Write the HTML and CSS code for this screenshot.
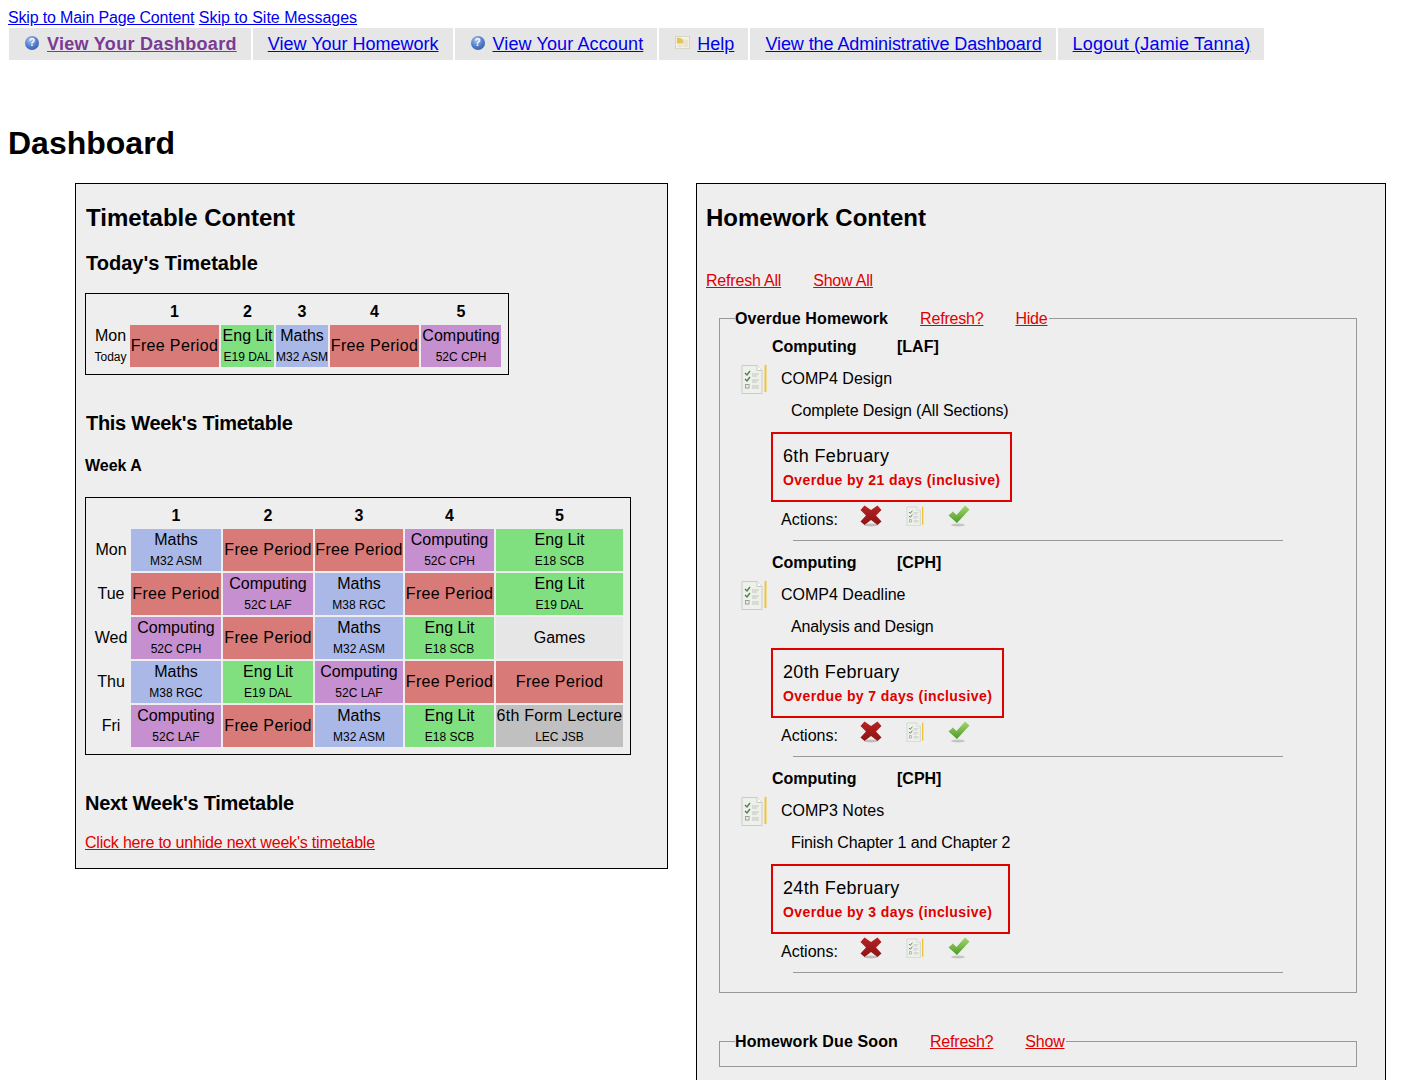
FILE: index.html
```html
<!DOCTYPE html>
<html>
<head>
    <title>Dashboard</title>
    <link rel="stylesheet" href="styles.css">
</head>
<body>
    <svg class="sprite" width="0" height="0">
        <defs>
            <linearGradient id="tick" x1="0" y1="0" x2="0" y2="1">
                <stop offset="0" stop-color="#a6d86a"/>
                <stop offset="1" stop-color="#4c9a2a"/>
            </linearGradient>
            <linearGradient id="redx" x1="0" y1="0" x2="0" y2="1">
                <stop offset="0" stop-color="#b82222"/>
                <stop offset="1" stop-color="#8c1414"/>
            </linearGradient>
        </defs>
        <symbol id="icon-folder" viewBox="0 0 16 16">
            <rect x="0.5" y="1.5" width="15" height="13" fill="#f4f1e6" stroke="#d8d4c4"/>
            <path d="M2 3h4l1 1.5h2V9H2z" fill="#e2c35a"/>
            <rect x="9" y="5" width="5" height="8" fill="#e8e3cf"/>
            <rect x="3" y="10" width="5" height="3" fill="#e8e3cf"/>
        </symbol>
        <symbol id="icon-list" viewBox="0 0 26 30">
            <path d="M1 1.5h15l5 5v23H1z" fill="#eef0ec" stroke="#c9cbc6"/>
            <path d="M16 1.5v5h5" fill="#fafafa" stroke="#c9cbc6"/>
            <path d="M4 9l2 2 3-4" fill="none" stroke="#4a7f42" stroke-width="1.3"/>
            <path d="M4 15l2 2 3-4" fill="none" stroke="#4a7f42" stroke-width="1.3"/>
            <rect x="4.5" y="20.5" width="3.5" height="3.5" fill="none" stroke="#9a9f98"/>
            <path d="M11 10h7M11 12h5M11 16h7M11 18h5M11 22h7M11 24h7" stroke="#c0c4be"/>
            <rect x="23.5" y="1" width="2" height="27" fill="#eec536"/>
        </symbol>
        <symbol id="icon-cross" viewBox="0 0 22 22">
            <ellipse cx="11" cy="20" rx="7" ry="1.5" fill="#bdbdbd"/>
            <path d="M4.5 0.5L11 5l6.5-4.5L21.5 5 16 10.5l5.5 6-4 3.5-6.5-5-6.5 5-4-3.5 5.500-6L0.500 5z" fill="url(#redx)"/>
        </symbol>
        <symbol id="icon-check" viewBox="0 0 22 22">
            <ellipse cx="10" cy="20" rx="7" ry="1.500" fill="#c4c4c4"/>
            <path d="M0.500 10.500L5 6.500 8.500 10 17 0.500l4.500 4L9 18z" fill="url(#tick)"/>
        </symbol>
    </svg>

    <div class="skip">
        <a href="#main" class="skip-main">Skip to Main Page Content</a>
        <a href="#messages">Skip to Site Messages</a>
    </div>

    <ul class="nav">
        <li><span class="nav-ball">?</span><a href="#" class="current">View Your Dashboard</a></li>
        <li><a href="#">View Your Homework</a></li>
        <li><span class="nav-ball">?</span><a href="#" class="account">View Your Account</a></li>
        <li><svg class="nav-icon"><use href="#icon-folder"/></svg><a href="#">Help</a></li>
        <li><a href="#" class="admin">View the Administrative Dashboard</a></li>
        <li><a href="#" class="logout">Logout (Jamie Tanna)</a></li>
    </ul>

    <h1>Dashboard</h1>

    <div class="panels" id="main">
        <div class="panel panel-left">
            <h2>Timetable Content</h2>
            <h3 class="first">Today's Timetable</h3>
            <table class="tt today">
                <tr><th></th><th>1</th><th>2</th><th>3</th><th>4</th><th>5</th></tr>
                <tr>
                    <td class="day">Mon<small>Today</small></td>
                    <td class="free">Free Period</td>
                    <td class="eng">Eng Lit<small>E19 DAL</small></td>
                    <td class="maths">Maths<small>M32 ASM</small></td>
                    <td class="free">Free Period</td>
                    <td class="comp">Computing<small>52C CPH</small></td>
                </tr>
            </table>

            <h3 class="wk">This Week's Timetable</h3>
            <h4>Week A</h4>
            <table class="tt week">
                <tr><th></th><th>1</th><th>2</th><th>3</th><th>4</th><th>5</th></tr>
                <tr>
                    <td class="day">Mon</td>
                    <td class="maths">Maths<small>M32 ASM</small></td>
                    <td class="free">Free Period</td>
                    <td class="free">Free Period</td>
                    <td class="comp">Computing<small>52C CPH</small></td>
                    <td class="eng">Eng Lit<small>E18 SCB</small></td>
                </tr>
                <tr>
                    <td class="day">Tue</td>
                    <td class="free">Free Period</td>
                    <td class="comp">Computing<small>52C LAF</small></td>
                    <td class="maths">Maths<small>M38 RGC</small></td>
                    <td class="free">Free Period</td>
                    <td class="eng">Eng Lit<small>E19 DAL</small></td>
                </tr>
                <tr>
                    <td class="day">Wed</td>
                    <td class="comp">Computing<small>52C CPH</small></td>
                    <td class="free">Free Period</td>
                    <td class="maths">Maths<small>M32 ASM</small></td>
                    <td class="eng">Eng Lit<small>E18 SCB</small></td>
                    <td class="games">Games</td>
                </tr>
                <tr>
                    <td class="day">Thu</td>
                    <td class="maths">Maths<small>M38 RGC</small></td>
                    <td class="eng">Eng Lit<small>E19 DAL</small></td>
                    <td class="comp">Computing<small>52C LAF</small></td>
                    <td class="free">Free Period</td>
                    <td class="free">Free Period</td>
                </tr>
                <tr>
                    <td class="day">Fri</td>
                    <td class="comp">Computing<small>52C LAF</small></td>
                    <td class="free">Free Period</td>
                    <td class="maths">Maths<small>M32 ASM</small></td>
                    <td class="eng">Eng Lit<small>E18 SCB</small></td>
                    <td class="lecture">6th Form Lecture<small>LEC JSB</small></td>
                </tr>
            </table>

            <h3 class="wk next">Next Week's Timetable</h3>
            <p class="unhide"><a href="#">Click here to unhide next week's timetable</a></p>
        </div>

        <div class="panel panel-right">
            <h2>Homework Content</h2>
            <p class="all-links"><a href="#">Refresh All</a><a href="#">Show All</a></p>

            <fieldset class="hw-group">
                <legend><b>Overdue Homework</b><a href="#">Refresh?</a><a href="#">Hide</a></legend>

                <div class="hw">
                    <div class="hw-subject"><span>Computing</span><span>[LAF]</span></div>
                    <div class="hw-title"><svg class="hw-icon"><use href="#icon-list"/></svg>COMP4 Design</div>
                    <div class="hw-desc">Complete Design (All Sections)</div>
                    <div class="hw-due">
                        <div class="hw-date">6th February</div>
                        <div class="hw-late">Overdue by 21 days (inclusive)</div>
                    </div>
                    <div class="hw-actions">
                        <span>Actions:</span>
                        <svg class="act act-x"><use href="#icon-cross"/></svg>
                        <svg class="act act-list"><use href="#icon-list"/></svg>
                        <svg class="act act-ok"><use href="#icon-check"/></svg>
                    </div>
                </div>

                <div class="hw">
                    <div class="hw-subject"><span>Computing</span><span>[CPH]</span></div>
                    <div class="hw-title"><svg class="hw-icon"><use href="#icon-list"/></svg>COMP4 Deadline</div>
                    <div class="hw-desc">Analysis and Design</div>
                    <div class="hw-due">
                        <div class="hw-date">20th February</div>
                        <div class="hw-late">Overdue by 7 days (inclusive)</div>
                    </div>
                    <div class="hw-actions">
                        <span>Actions:</span>
                        <svg class="act act-x"><use href="#icon-cross"/></svg>
                        <svg class="act act-list"><use href="#icon-list"/></svg>
                        <svg class="act act-ok"><use href="#icon-check"/></svg>
                    </div>
                </div>

                <div class="hw">
                    <div class="hw-subject"><span>Computing</span><span>[CPH]</span></div>
                    <div class="hw-title"><svg class="hw-icon"><use href="#icon-list"/></svg>COMP3 Notes</div>
                    <div class="hw-desc">Finish Chapter 1 and Chapter 2</div>
                    <div class="hw-due wide">
                        <div class="hw-date">24th February</div>
                        <div class="hw-late">Overdue by 3 days (inclusive)</div>
                    </div>
                    <div class="hw-actions">
                        <span>Actions:</span>
                        <svg class="act act-x"><use href="#icon-cross"/></svg>
                        <svg class="act act-list"><use href="#icon-list"/></svg>
                        <svg class="act act-ok"><use href="#icon-check"/></svg>
                    </div>
                </div>
            </fieldset>

            <fieldset class="hw-group closed">
                <legend><b>Homework Due Soon</b><a href="#">Refresh?</a><a href="#">Show</a></legend>
            </fieldset>
        </div>
    </div>
</body>
</html>
```

FILE: styles.css
```css
html, body {
    height: 1080px;
    overflow: hidden;
}

body {
    margin: 0;
    padding: 8px;
    box-sizing: border-box;
    font-family: "Liberation Sans", Arial, sans-serif;
    font-size: 16px;
    color: #000;
    background-color: #fff;
}

a {
    color: #e00000;
}

.sprite {
    display: block;
}

.skip {
    height: 20px;
    line-height: 20px;
}

.skip a {
    color: #0000ee;
}

.skip-main {
    letter-spacing: -0.16px;
}

/* Barra de navegacion */
.nav {
    display: flex;
    gap: 2px;
    list-style: none;
    margin: 0 0 0 1px;
    padding: 0;
    width: fit-content;
}

.nav li {
    display: flex;
    align-items: center;
    height: 32px;
    padding: 0 14px 0 15px;
    background-color: #e6e6e6;
    font-size: 18px;
}

.nav a {
    color: #0000ee;
}

.nav a.current {
    color: #7a3a96;
    font-weight: bold;
    letter-spacing: 0.3px;
}

.nav a.account {
    letter-spacing: 0.12px;
}

.nav a.admin {
    letter-spacing: -0.08px;
}

.nav a.logout {
    letter-spacing: 0.2px;
}

.nav-ball {
    display: flex;
    align-items: center;
    justify-content: center;
    width: 14px;
    height: 14px;
    margin: -3px 8px 0 1px;
    border-radius: 50%;
    background: radial-gradient(circle at 40% 30%, #a9c4ef, #4f7cc9 50%, #2b4f9a);
    color: #fff;
    font-size: 10px;
    font-weight: bold;
}

.nav-icon {
    width: 15px;
    height: 15px;
    margin: -3px 7px 0 1px;
}

h1 {
    margin: 64px 0 21px 0;
    font-size: 32px;
    line-height: 38px;
}

.panels {
    display: flex;
    align-items: flex-start;
    gap: 28px;
    margin-left: 67px;
}

.panel {
    box-sizing: border-box;
    border: 1px solid #000;
    background-color: #eee;
    padding: 20px 9px 15px 9px;
}

.panel-left {
    width: 593px;
}

.panel-left h2 {
    margin-left: 1px;
}

.panel-right {
    width: 690px;
    flex-shrink: 0;
    padding-bottom: 40px;
}

h2 {
    margin: 0;
    font-size: 24px;
    line-height: 28px;
}

h3 {
    margin: 36px 0 0 1px;
    font-size: 20px;
    line-height: 24px;
}

h3.first {
    margin-top: 19px;
}

h3.wk {
    letter-spacing: -0.3px;
}

h3.next {
    margin-left: 0;
}

h4 {
    margin: 21px 0 21px 0;
    font-size: 16px;
    line-height: 20px;
}

/* Horarios */
.tt {
    border: 1px solid #000;
    border-spacing: 2px;
    padding: 5px;
    margin-top: 18px;
}

h4 + .tt {
    margin-top: 0;
}

.tt th {
    height: 22px;
    padding: 0;
    font-size: 16px;
    line-height: 22px;
}

.tt td {
    height: 42px;
    padding: 0;
    text-align: center;
    font-size: 16px;
    line-height: 22px;
    white-space: nowrap;
}

.tt small {
    display: block;
    font-size: 12px;
    line-height: 20px;
    letter-spacing: 0;
}

.today th:nth-child(1) { width: 35px; }
.today th:nth-child(2) { width: 89px; }
.today th:nth-child(3) { width: 53px; }
.today th:nth-child(4) { width: 52px; }
.today th:nth-child(5) { width: 89px; }
.today th:nth-child(6) { width: 80px; }

.week th:nth-child(1) { width: 36px; }
.week th:nth-child(2) { width: 90px; }
.week th:nth-child(3) { width: 90px; }
.week th:nth-child(4) { width: 88px; }
.week th:nth-child(5) { width: 89px; }
.week th:nth-child(6) { width: 127px; }

.free { background-color: #d87b78; letter-spacing: 0.35px; }
.eng { background-color: #80e080; }
.maths { background-color: #aab8e8; }
.comp { background-color: #c68fcf; }
.games { background-color: #e6e6e6; }
.lecture { background-color: #c0c0c0; letter-spacing: 0.25px; }

.unhide {
    margin: 18px 0 0 0;
    line-height: 20px;
    letter-spacing: -0.2px;
}

/* Tareas */
.all-links {
    margin: 39px 0 0 0;
    line-height: 20px;
    letter-spacing: -0.2px;
}

.all-links a {
    margin-right: 32px;
}

.hw-group {
    margin: 16px 19px 0 13px;
    padding: 0 0 19px 15px;
    border: 1px solid #999;
    min-width: 0;
}

.hw-group legend {
    padding: 2px 1px 0 0;
    line-height: 20px;
}

.hw-group legend b {
    letter-spacing: 0.12px;
}

.hw-group legend a {
    margin-left: 32px;
    letter-spacing: -0.2px;
}

.hw-group.closed {
    margin-top: 37px;
    padding-bottom: 14px;
}

.hw {
    padding-top: 7px;
}

.hw + .hw {
    padding-top: 11px;
}

.hw-subject {
    display: flex;
    margin-left: 37px;
    font-weight: bold;
    line-height: 22px;
}

.hw-subject span:first-child {
    width: 125px;
}

.hw-title {
    display: flex;
    align-items: center;
    height: 32px;
    margin: 5px 0 0 6px;
}

.hw-icon {
    width: 26px;
    height: 30px;
    margin-right: 14px;
}

.hw-desc {
    margin: 6px 0 0 56px;
    line-height: 20px;
    letter-spacing: -0.13px;
}

.hw-due {
    box-sizing: border-box;
    width: fit-content;
    height: 70px;
    margin: 11px 0 0 36px;
    padding: 11px 10px 0 10px;
    border: 2px solid #e00000;
}

.hw-due.wide {
    width: 239px;
}

.hw-date {
    font-size: 18px;
    line-height: 22px;
    letter-spacing: 0.35px;
}

.hw-late {
    margin-top: 3px;
    font-size: 14px;
    font-weight: bold;
    line-height: 20px;
    letter-spacing: 0.4px;
    color: #e00000;
}

.hw-actions {
    display: flex;
    align-items: center;
    height: 30px;
    margin: 3px 0 0 46px;
    padding-bottom: 6px;
    position: relative;
}

.hw-actions::after {
    content: "";
    position: absolute;
    left: 12px;
    bottom: 0;
    width: 490px;
    height: 1px;
    background-color: #999;
}

.hw-actions span {
    width: 79px;
}

.act {
    margin-top: -8px;
}

.act-x {
    width: 22px;
    height: 22px;
}

.act-list {
    width: 18px;
    height: 20px;
    margin-left: 24px;
}

.act-ok {
    width: 22px;
    height: 22px;
    margin-left: 24px;
}
```
